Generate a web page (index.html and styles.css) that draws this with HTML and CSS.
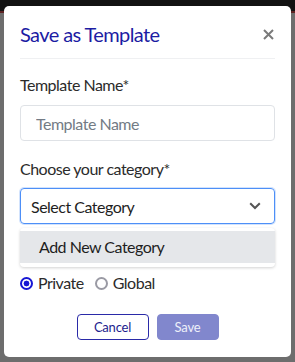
FILE: index.html
```html
<!DOCTYPE html>
<html>
<head>
  <link rel="stylesheet" href="styles.css">
</head>
<body>
  <div class="page-top"></div>
  <div class="modal">
    <div class="modal-header">
      <h2 class="modal-title">Save as Template</h2>
      <button class="close-btn" aria-label="Close">
        <svg width="11" height="11" viewBox="0 0 11 11"><path d="M1 1L10 10M10 1L1 10" stroke="#7a7a7a" stroke-width="2" fill="none"/></svg>
      </button>
    </div>
    <div class="modal-body">
      <label class="field-label" for="templateName">Template Name*</label>
      <input class="text-input" id="templateName" type="text" placeholder="Template Name">

      <label class="field-label second">Choose your category*</label>
      <div class="select-box">
        <span>Select Category</span>
        <svg width="12" height="8" viewBox="0 0 12 8"><path d="M1.2 1.2L6 6L10.8 1.2" stroke="#555" stroke-width="2" fill="none"/></svg>
      </div>
      <div class="select-menu">
        <div class="menu-item">Add New Category</div>
      </div>

      <div class="radio-row">
        <label class="radio"><span class="dot checked"></span>Private</label>
        <label class="radio"><span class="dot"></span>Global</label>
      </div>

      <div class="actions">
        <button class="btn btn-outline">Cancel</button>
        <button class="btn btn-primary">Save</button>
      </div>
    </div>
  </div>
</body>
</html>
```
FILE: styles.css
```css
body {
  margin: 0;
  background: #6d6d6d;
  font-family: "Lato", "Open Sans", sans-serif;
  letter-spacing: -0.5px;
  height: 362px;
  overflow: hidden;
}

.page-top {
  height: 11px;
  background: #121212;
  border-bottom: 2px solid #5c2222;
}

.modal {
  position: absolute;
  top: 6px;
  left: 4px;
  width: 287px;
  height: 351px;
  box-sizing: border-box;
  background: #fff;
  border-radius: 5px;
}

.modal-header {
  margin: 0 16px;
  padding: 16px 0 12px;
  border-bottom: 1px solid #eff0f2;
  display: flex;
  align-items: center;
  justify-content: space-between;
}

.modal-title {
  margin: 0;
  font-size: 20px;
  line-height: 24px;
  font-weight: 400;
  letter-spacing: -0.6px;
  color: #1c1ca3;
}

.close-btn {
  border: 0;
  background: none;
  padding: 0;
  margin-right: 1px;
  display: flex;
}

.modal-body {
  padding: 16px 16px 0;
  display: flex;
  flex-direction: column;
}

.field-label {
  font-size: 16px;
  line-height: 20px;
  color: #2b2b2b;
  margin-bottom: 10px;
}

.field-label.second {
  margin-top: 18px;
  margin-bottom: 9px;
}

.text-input {
  height: 36px;
  box-sizing: border-box;
  border: 1px solid #dfe2e6;
  border-radius: 4px;
  padding: 0 15px;
  font-family: inherit;
  font-size: 16px;
  letter-spacing: -0.5px;
  color: #222;
  outline: none;
}

.text-input::placeholder {
  color: #737b85;
}

.select-box {
  height: 36px;
  box-sizing: border-box;
  border: 1px solid #4d8ff7;
  box-shadow: 0 0 0 1px rgba(77, 143, 247, 0.25);
  border-radius: 4px;
  padding: 0 13px 0 10px;
  display: flex;
  align-items: center;
  justify-content: space-between;
  font-size: 16px;
  color: #1e1e1e;
}

.select-menu {
  margin-top: 4px;
  padding: 3px 0 4px;
  background: #fff;
  border-radius: 4px;
  box-shadow: 0 1px 3px rgba(0, 0, 0, 0.18);
}

.menu-item {
  height: 32px;
  line-height: 32px;
  padding-left: 19px;
  background: #e5e7ea;
  font-size: 16px;
  color: #1e1e1e;
}

.radio-row {
  display: flex;
  gap: 11px;
  margin-top: 6px;
}

.radio {
  display: flex;
  align-items: center;
  gap: 5px;
  font-size: 16px;
  line-height: 20px;
  color: #2b2b2b;
}

.dot {
  width: 13px;
  height: 13px;
  box-sizing: border-box;
  border-radius: 50%;
  border: 2px solid #9a9aa4;
}

.dot.checked {
  border-color: #1717d4;
  background: radial-gradient(circle, #1717d4 0 2.6px, #fff 3.2px);
}

.actions {
  display: flex;
  justify-content: center;
  gap: 8px;
  margin-top: 21px;
}

.btn {
  height: 26px;
  box-sizing: border-box;
  border-radius: 4px;
  font-family: inherit;
  font-size: 13px;
  letter-spacing: -0.2px;
}

.btn-outline {
  width: 72px;
  background: #fff;
  border: 1px solid #2a2aa8;
  color: #1c1c8e;
}

.btn-primary {
  width: 62px;
  background: #8187cd;
  border: 1px solid #8187cd;
  color: #eef0fa;
}
```
